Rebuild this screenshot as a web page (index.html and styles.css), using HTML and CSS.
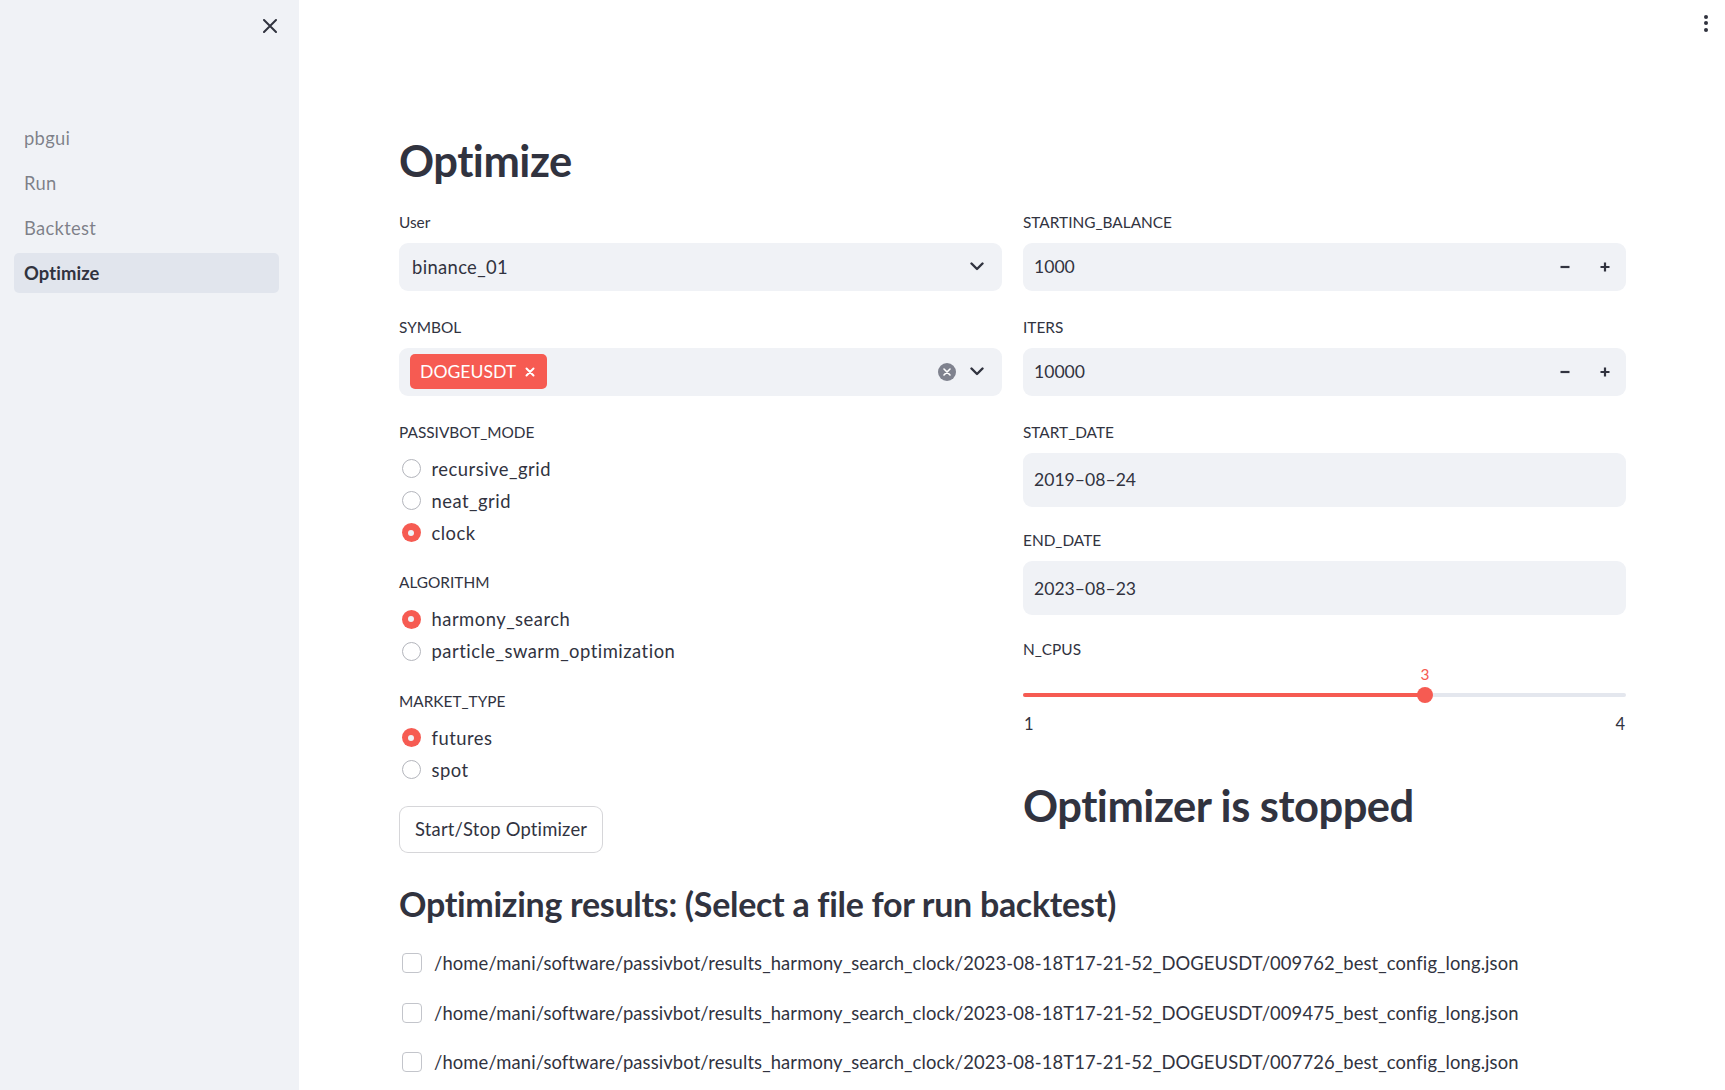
FILE: index.html
```html
<!DOCTYPE html>
<html lang="en">
<head>
<meta charset="utf-8">
<title>Optimize</title>
<link rel="stylesheet" href="styles.css">
</head>
<body>
<div class="app">
  <aside class="sidebar">
    <div class="sidebar-top">
      <button class="icon-btn close-btn" aria-label="Close sidebar">
        <svg width="14" height="14" viewBox="0 0 14 14"><path d="M1 1L13 13M13 1L1 13" stroke="#31333f" stroke-width="2" stroke-linecap="round"/></svg>
      </button>
    </div>
    <nav class="nav">
      <a class="nav-item">pbgui</a>
      <a class="nav-item">Run</a>
      <a class="nav-item">Backtest</a>
      <a class="nav-item active">Optimize</a>
    </nav>
  </aside>

  <main class="main">
    <div class="menu-dots"><span></span><span></span><span></span></div>

    <h1 class="title">Optimize</h1>

    <div class="cols">
      <div class="col">
        <div class="field">
          <div class="label">User</div>
          <div class="box select">
            <span class="value text">binance_01</span>
            <span class="select-icons">
              <svg class="chev" width="14" height="9" viewBox="0 0 14 9"><path d="M1.5 1.5L7 7L12.5 1.5" stroke="#31333f" stroke-width="2.4" fill="none" stroke-linecap="round" stroke-linejoin="round"/></svg>
            </span>
          </div>
        </div>

        <div class="field">
          <div class="label">SYMBOL</div>
          <div class="box select multi">
            <span class="tag">DOGEUSDT
              <svg width="10" height="10" viewBox="0 0 10 10"><path d="M1.5 1.5L8.5 8.5M8.5 1.5L1.5 8.5" stroke="#fff" stroke-width="2" stroke-linecap="round"/></svg>
            </span>
            <span class="select-icons">
              <span class="clear-icon"><svg width="8" height="8" viewBox="0 0 8 8"><path d="M1 1L7 7M7 1L1 7" stroke="#fff" stroke-width="1.6" stroke-linecap="round"/></svg></span>
              <svg class="chev" width="14" height="9" viewBox="0 0 14 9"><path d="M1.5 1.5L7 7L12.5 1.5" stroke="#31333f" stroke-width="2.4" fill="none" stroke-linecap="round" stroke-linejoin="round"/></svg>
            </span>
          </div>
        </div>

        <div class="field radios">
          <div class="label">PASSIVBOT_MODE</div>
          <div class="radio"><span class="dot"></span>recursive_grid</div>
          <div class="radio"><span class="dot"></span>neat_grid</div>
          <div class="radio checked"><span class="dot"></span>clock</div>
        </div>

        <div class="field radios">
          <div class="label">ALGORITHM</div>
          <div class="radio checked"><span class="dot"></span>harmony_search</div>
          <div class="radio"><span class="dot"></span>particle_swarm_optimization</div>
        </div>

        <div class="field radios last">
          <div class="label">MARKET_TYPE</div>
          <div class="radio checked"><span class="dot"></span>futures</div>
          <div class="radio"><span class="dot"></span>spot</div>
        </div>

        <div><button class="btn">Start/Stop Optimizer</button></div>
      </div>

      <div class="col">
        <div class="field">
          <div class="label">STARTING_BALANCE</div>
          <div class="box number">
            <span class="value">1000</span>
            <span class="steps">
              <span class="step"><svg width="12" height="12" viewBox="0 0 12 12"><path d="M1.5 6H10.5" stroke="#31333f" stroke-width="2.2"/></svg></span>
              <span class="step"><svg width="12" height="12" viewBox="0 0 12 12"><path d="M1.5 6H10.5M6 1.5V10.5" stroke="#31333f" stroke-width="2.2"/></svg></span>
            </span>
          </div>
        </div>

        <div class="field">
          <div class="label">ITERS</div>
          <div class="box number">
            <span class="value">10000</span>
            <span class="steps">
              <span class="step"><svg width="12" height="12" viewBox="0 0 12 12"><path d="M1.5 6H10.5" stroke="#31333f" stroke-width="2.2"/></svg></span>
              <span class="step"><svg width="12" height="12" viewBox="0 0 12 12"><path d="M1.5 6H10.5M6 1.5V10.5" stroke="#31333f" stroke-width="2.2"/></svg></span>
            </span>
          </div>
        </div>

        <div class="field date-field">
          <div class="label">START_DATE</div>
          <div class="box date"><span class="value">2019–08–24</span></div>
        </div>

        <div class="field date-field">
          <div class="label">END_DATE</div>
          <div class="box date"><span class="value">2023–08–23</span></div>
        </div>

        <div class="field slider-field">
          <div class="label">N_CPUS</div>
          <div class="slider">
            <div class="slider-val-row"><span class="slider-val" style="left: 66.667%">3</span></div>
            <div class="slider-track">
              <div class="slider-fill" style="width: 66.667%"></div>
              <span class="slider-thumb" style="left: 66.667%"></span>
            </div>
            <div class="slider-ticks"><span>1</span><span>4</span></div>
          </div>
        </div>

        <h1 class="status">Optimizer is stopped</h1>
      </div>
    </div>

    <h2 class="subtitle">Optimizing results: (Select a file for run backtest)</h2>

    <div class="results">
      <label class="check"><span class="box-check"></span>/home/mani/software/passivbot/results_harmony_search_clock/2023-08-18T17-21-52_DOGEUSDT/009762_best_config_long.json</label>
      <label class="check"><span class="box-check"></span>/home/mani/software/passivbot/results_harmony_search_clock/2023-08-18T17-21-52_DOGEUSDT/009475_best_config_long.json</label>
      <label class="check"><span class="box-check"></span>/home/mani/software/passivbot/results_harmony_search_clock/2023-08-18T17-21-52_DOGEUSDT/007726_best_config_long.json</label>
    </div>
  </main>
</div>
</body>
</html>
```

FILE: styles.css
```css
* { box-sizing: border-box; }

html, body {
  margin: 0;
  padding: 0;
}

body {
  font-family: Lato, "Noto Sans", sans-serif;
  font-size: 17.6px;
  color: #31333f;
  background: #ffffff;
}

.app {
  display: flex;
  height: 1090px;
  overflow: hidden;
}

/* Sidebar */
.sidebar {
  width: 299px;
  flex: none;
  background: #f0f2f6;
  padding: 0 20px 0 14px;
}

.sidebar-top {
  height: 117.5px;
  display: flex;
  justify-content: flex-end;
  align-items: flex-start;
  padding-top: 19px;
  padding-right: 2px;
}

.icon-btn {
  border: none;
  background: transparent;
  padding: 0;
  width: 14px;
  height: 14px;
  display: flex;
}

.nav {
  display: flex;
  flex-direction: column;
  gap: 5px;
}

.nav-item {
  height: 40px;
  display: flex;
  align-items: center;
  padding-left: 10px;
  border-radius: 5px;
  color: rgba(49, 51, 63, 0.6);
  font-size: 18.4px;
  letter-spacing: 0.3px;
}

.nav-item.active {
  background: #e1e5ed;
  color: #31333f;
  font-weight: 700;
  letter-spacing: 0.1px;
}

/* Main */
.main {
  flex: 1;
  position: relative;
  padding: 131px 99px 0 100px;
  overflow: hidden;
}

.menu-dots {
  position: absolute;
  top: 14.5px;
  right: 17px;
  display: flex;
  flex-direction: column;
  gap: 2.5px;
}

.menu-dots span {
  width: 4px;
  height: 4px;
  border-radius: 50%;
  background: #31333f;
}

.title {
  margin: 0;
  font-size: 43.5px;
  line-height: 58px;
  font-weight: 700;
  letter-spacing: -0.5px;
}

.cols {
  display: grid;
  grid-template-columns: 1fr 1fr;
  column-gap: 21px;
  margin-top: 21.5px;
  align-items: start;
}

.col {
  display: flex;
  flex-direction: column;
}

.field {
  margin-bottom: 25px;
}

.field.radios { margin-bottom: 22.5px; }
.field.radios.last { margin-bottom: 20px; }
.field.date-field { margin-bottom: 22.5px; }
.field.slider-field { margin-bottom: 0; }

.label {
  font-size: 15.4px;
  line-height: 22px;
  height: 22px;
  margin-bottom: 10px;
}

.slider-field .label {
  margin-bottom: 0;
}

.box {
  background: #f0f2f6;
  border-radius: 9px;
  height: 48px;
  display: flex;
  align-items: center;
}

.box .value {
  font-size: 17.6px;
}

.box .value.text {
  font-size: 18.4px;
  letter-spacing: 0.35px;
}

.select {
  padding: 0 18px 0 13px;
}

.select.multi {
  padding-left: 11px;
}

.select-icons {
  margin-left: auto;
  display: flex;
  align-items: center;
  gap: 14px;
}

.chev { display: block; }

.clear-icon {
  width: 18px;
  height: 18px;
  border-radius: 50%;
  background: #7f828e;
  display: flex;
  align-items: center;
  justify-content: center;
}

.tag {
  height: 35px;
  background: #f65b52;
  color: #ffffff;
  border-radius: 5px;
  display: flex;
  align-items: center;
  gap: 9px;
  padding: 0 12px 0 10px;
  font-size: 17.6px;
}

.number {
  padding-left: 11px;
}

.steps {
  margin-left: auto;
  display: flex;
  padding-right: 1px;
}

.step {
  width: 40px;
  height: 48px;
  display: flex;
  align-items: center;
  justify-content: center;
}

.date {
  height: 54px;
  padding-left: 11px;
}

/* Radios */
.radio {
  height: 32px;
  display: flex;
  align-items: center;
  font-size: 18.4px;
  letter-spacing: 0.5px;
}

.radio .dot {
  width: 19px;
  height: 19px;
  border-radius: 50%;
  border: 1.5px solid #b3b5bc;
  background: #ffffff;
  margin: 0 11px 0 2.5px;
  flex: none;
  position: relative;
}

.radio.checked .dot {
  border: none;
  background: #f65b52;
}

.radio.checked .dot::after {
  content: "";
  position: absolute;
  left: 6.5px;
  top: 6.5px;
  width: 6px;
  height: 6px;
  border-radius: 50%;
  background: #f0f2f6;
}

/* Button */
.btn {
  height: 47px;
  padding: 0 15px;
  border: 1px solid rgba(49, 51, 63, 0.2);
  border-radius: 9px;
  background: #ffffff;
  color: #31333f;
  font-family: inherit;
  font-size: 18.4px;
  letter-spacing: 0.2px;
}

/* Slider */
.slider {
  padding-top: 4px;
}

.slider-val-row {
  position: relative;
  height: 20px;
}

.slider-val {
  position: absolute;
  top: 0;
  transform: translateX(-50%);
  line-height: 20px;
  font-size: 15.4px;
  color: #f65b52;
}

.slider-track {
  position: relative;
  height: 4px;
  margin-top: 9px;
  background: #e4e7ee;
  border-radius: 2px;
}

.slider-fill {
  height: 100%;
  background: #f65b52;
  border-radius: 2px;
}

.slider-thumb {
  position: absolute;
  top: 50%;
  width: 16px;
  height: 16px;
  border-radius: 50%;
  background: #f65b52;
  transform: translate(-50%, -50%);
}

.slider-ticks {
  display: flex;
  justify-content: space-between;
  margin-top: 16px;
  line-height: 22px;
  font-size: 16.5px;
  padding: 0 1px 0 1px;
}

.status {
  margin: 41px 0 0 0;
  font-size: 43.5px;
  line-height: 58px;
  font-weight: 700;
  letter-spacing: -0.5px;
}

.subtitle {
  margin: 27px 0 0 0;
  font-size: 34px;
  line-height: 48px;
  font-weight: 700;
  letter-spacing: -0.3px;
}

.results {
  margin-top: 11px;
  display: flex;
  flex-direction: column;
}

.check {
  height: 49.5px;
  display: flex;
  align-items: center;
  font-size: 18.4px;
  letter-spacing: 0.11px;
}

.box-check {
  width: 20px;
  height: 20px;
  border: 1px solid #c3c5cb;
  border-radius: 4px;
  margin: 0 12px 0 3px;
  flex: none;
  background: #ffffff;
}
```
